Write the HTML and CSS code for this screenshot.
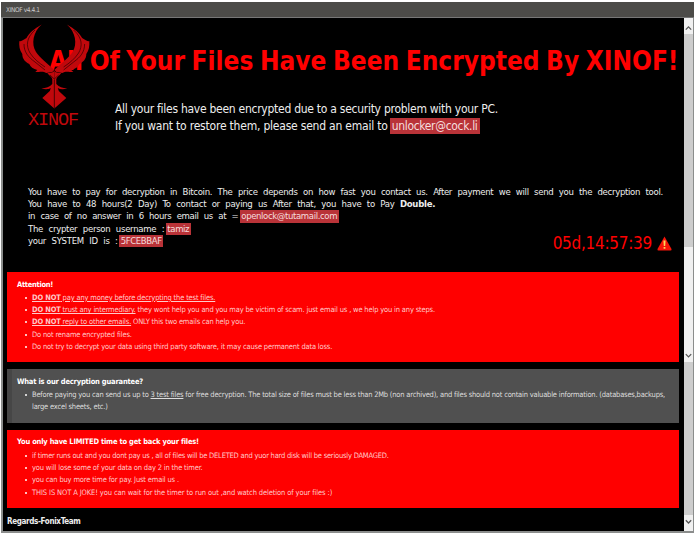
FILE: index.html
```html
<!DOCTYPE html>
<html lang="en">
<head>
<meta charset="utf-8">
<title>XINOF v4.4.1</title>
<link rel="stylesheet" href="styles.css">
</head>
<body>
<div class="window">
  <header class="titlebar">XINOF v4.4.1</header>
  <div class="body">
    <main class="content">
      <section class="hero">
        <div class="logo">
          <svg viewBox="0 0 71 86" width="71" height="86" aria-hidden="true">
            <g id="wing">
              <path d="M22.700.500C15 5 10 9 7.500 14 4 16 1.500 18 .3 17c-.3 5 .2 9 3 13 0 5 3 8 7 10 1 3 4 5 8 6l-2 2c5 0 8-1 11 1l6-1 2-2C29 40 21 34 17 28 12 20 14 8 22.700.500z"/>
              <path d="M35.300 47c-2 2-5 2-7 2 2 3 4 3 5 6v5c-3 3-6 4-11 4.500 4 1 7 1 9.500-.5l-1 3-7.500 7 12 10.500z"/>
              <path class="cut" d="M16 6C7 14 7 22 11 29c4 6 9 10 15 14M5 20c0 8 4 13 11 18l10 8"/>
            </g>
            <use href="#wing" transform="matrix(-1 0 0 1 70.600 0)"/>
            <path class="cut" d="M35.300 56v28M31 51l4.300 4 4.300-4"/>
          </svg>
          <div class="logo-name">XINOF</div>
        </div>
        <h1>All Of Your Files Have Been Encrypted By XINOF!</h1>
        <div class="intro">
          <div class="i1">All your files have been encrypted due to a security problem with your PC.</div>
          <div class="i2"><span>If you want to restore them, please send an email to</span><mark>unlocker@cock.li</mark></div>
        </div>
      </section>
      <section class="details">
        <div class="d1">You have to pay for decryption in Bitcoin. The price depends on how fast you contact us. After payment we will send you the decryption tool.</div>
        <div class="d2">You have to 48 hours(2 Day) To contact or paying us After that, you have to Pay <b>Double.</b></div>
        <div class="d3"><span>in case of no answer in 6 hours email us at =</span><mark>openlock@tutamail.com</mark></div>
        <div class="d4"><span>The crypter person username :</span><mark>tamiz</mark></div>
        <div class="d5"><span>your SYSTEM ID is :</span><mark>5FCEBBAF</mark></div>
        <div class="timer"><span>05d,14:57:39</span>
          <svg viewBox="0 0 15 15" width="15" height="15" aria-hidden="true"><path d="M7.500.500L14.500 13q.3 1.500-1 1.500h-12Q.2 14.500.500 13z" fill="#f81408"/><path d="M6.400 4.500h2.200L8.200 10H6.800zM6.600 11h1.800v1.700H6.600z" fill="#ffd75a"/></svg>
        </div>
      </section>
      <section class="card attention">
        <h2>Attention!</h2>
        <ul>
          <li><u><b>DO NOT</b> pay any money before decrypting the test files.</u></li>
          <li><u><b>DO NOT</b> trust any intermediary.</u> they wont help you and you may be victim of scam. just email us , we help you in any steps.</li>
          <li><u><b>DO NOT</b> reply to other emails.</u> ONLY this two emails can help you.</li>
          <li>Do not rename encrypted files.</li>
          <li>Do not try to decrypt your data using third party software, it may cause permanent data loss.</li>
        </ul>
      </section>
      <section class="card guarantee">
        <h2>What is our decryption guarantee?</h2>
        <ul>
          <li>Before paying you can send us up to <u>3 test files</u> for free decryption. The total size of files must be less than 2Mb (non archived), and files should not contain valuable information. (databases,backups,<br>large excel sheets, etc.)</li>
        </ul>
      </section>
      <section class="card limited">
        <h2>You only have LIMITED time to get back your files!</h2>
        <ul>
          <li class="tight">if timer runs out and you dont pay us , all of files will be DELETED and yuor hard disk will be seriously DAMAGED.</li>
          <li>you will lose some of your data on day 2 in the timer.</li>
          <li>you can buy more time for pay. Just email us .</li>
          <li class="loose">THIS IS NOT A JOKE! you can wait for the timer to run out ,and watch deletion of your files :)</li>
        </ul>
      </section>
      <footer>Regards-FonixTeam</footer>
    </main>
    <aside class="scrollbars">
      <div class="bar upper">
        <svg viewBox="0 0 10 16" width="10" height="16"><path d="M2 12l3-3 3 3"/></svg>
        <div class="thumb"></div>
        <svg class="end" viewBox="0 0 10 13" width="10" height="13"><path d="M2 5l3 3 3-3"/></svg>
      </div>
      <div class="bar lower">
        <div class="thumb"></div>
        <svg viewBox="0 0 10 16" width="10" height="16"><path d="M2 5l3 3 3-3"/></svg>
      </div>
    </aside>
  </div>
</div>
</body>
</html>
```
FILE: styles.css
```css
* { box-sizing: border-box; }
body { margin: 0; background: #fff; font-family: "DejaVu Sans Condensed", "DejaVu Sans", sans-serif; font-stretch: condensed; color: #eee; white-space: nowrap; overflow: hidden; }
.window { width: 693px; height: 531px; margin: 2px 0 0 1px; border: solid #8b8d8c; border-width: 0 1px 2px 2px; background: #000; }
.titlebar { height: 16px; margin: 0 -1px 0 -2px; padding-left: 5px; background: #4c4b48; border-bottom: 1px solid #777; font-size: 6.500px; line-height: 16px; color: #ccc; letter-spacing: -.38px; }
.body { display: flex; height: 513px; }
.content { width: 681px; flex: none; padding: 0 5px 0 4px; }
.hero { height: 168px; display: grid; grid-template-columns: 107px 1fr; grid-template-rows: 83px 1fr; margin: 0 -5px 0 -4px; }
.logo { grid-area: 1 / 1 / 3 / 2; z-index: 2; padding: 6px 0 0 16px; color: #c0080c; }
.logo svg { display: block; fill: #c0080c; }
.logo .cut { fill: none; stroke: #300; stroke-width: .7; }
.logo-name { font: 18.500px/20px "Liberation Mono", monospace; letter-spacing: -1.100px; padding: 1px 0 0 9px; }
h1 { grid-area: 1 / 1 / 2 / 3; z-index: 1; margin: 26px 0 0 46px; font-size: 26px; line-height: 34px; font-weight: bold; word-spacing: -1.600px; color: #f00; }
.intro { grid-area: 2 / 2 / 3 / 3; padding-left: 5px; font-size: 12px; line-height: 16.500px; letter-spacing: -.27px; }
.i2, .d3, .d4, .d5 { display: flex; }
.i2 { letter-spacing: -.21px; }
.i2 mark { letter-spacing: -.33px; }
mark { background: #b93338; color: #f5dede; padding: 0 2px; margin-left: 2px; }
.details { position: relative; height: 86px; padding: 0 0 0 21px; font-size: 9.500px; line-height: 12.200px; word-spacing: 3px; letter-spacing: -.28px; }
.d1 { letter-spacing: -.31px; }
.d3 span { letter-spacing: -.36px; }
.details mark { padding: 0 1.500px; margin-left: 1.500px; letter-spacing: -.38px; }
.timer { position: absolute; right: 7px; top: 46px; display: flex; align-items: center; gap: 5px; font-size: 17px; line-height: 22px; color: #f00; }
.card { padding: 6px 10px; font-size: 7.500px; line-height: 12.200px; letter-spacing: -.175px; }
.card h2 { margin: 0; font-size: 7.500px; line-height: 13px; color: #fff; letter-spacing: -.2px; }
.card ul { margin: 0; padding: 1px 0 0 15px; list-style: none; }
.card li { position: relative; }
.card li::before { content: ""; position: absolute; left: -7px; top: 5px; width: 2px; height: 2px; border-radius: 1px; background: #fff; }
.attention, .limited { background: #f00; color: #ffc9c9; }
.attention { height: 90px; }
.attention h2 { letter-spacing: -.3px; }
.guarantee { height: 54px; margin: 7px 0; background: #505050; border-left: 5px solid #464646; padding-left: 5px; color: #ddd; letter-spacing: -.205px; }
.limited { height: 78px; padding-top: 5px; }
.limited ul { padding-top: 2px; }
.card .tight { letter-spacing: -.225px; }
.card .loose { letter-spacing: -.12px; }
footer { padding-top: 7px; font-size: 8px; font-weight: bold; line-height: 13px; letter-spacing: -.35px; }
.scrollbars { width: 9px; }
.bar { background: #f0f0f0; display: flex; flex-direction: column; }
.bar svg { display: block; flex: none; fill: none; stroke: #555; stroke-width: 1.400; width: 9px; }
.thumb { background: #cdcdcd; }
.upper { height: 344px; }
.upper .thumb { height: 213px; }
.upper .end { margin-top: auto; }
.lower { height: 169px; }
.lower .thumb { flex: 1; }
```
